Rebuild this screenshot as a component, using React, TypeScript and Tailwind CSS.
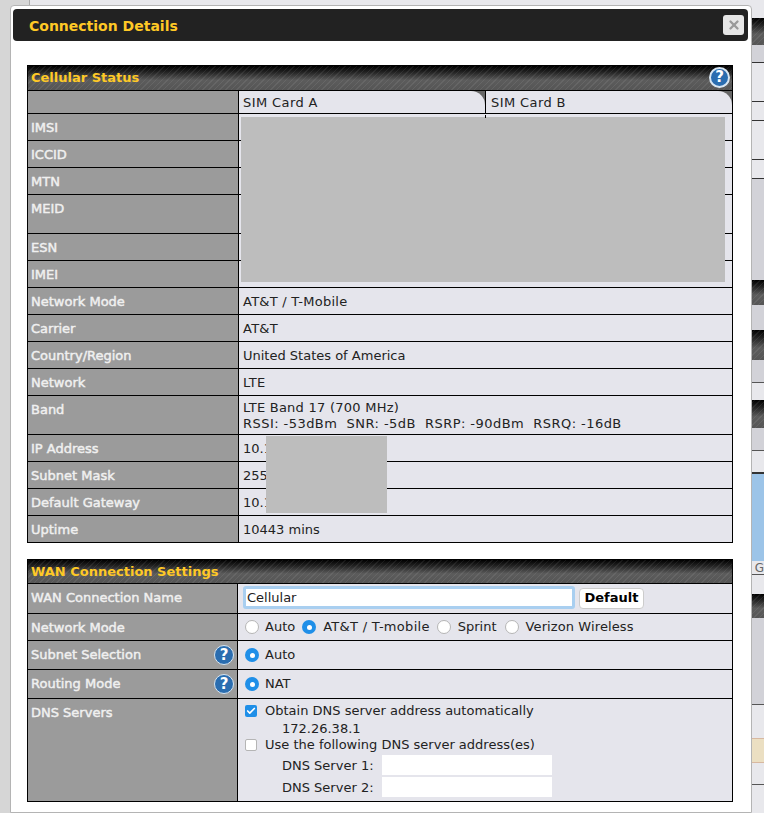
import React from 'react';
import { Check, X } from 'lucide-react';

const stripes =
  "bg-[repeating-linear-gradient(135deg,rgba(255,255,255,0.07)_0px,rgba(255,255,255,0.07)_1px,transparent_1px,transparent_4px),linear-gradient(to_bottom,#000_0%,#222_25%,#5c5c5c_60%,#555_100%)]";

const Help = ({ className = '' }: { className?: string }) => (
  <span className={`flex items-center justify-center rounded-full border border-[#d8e6f2] bg-[#2a6db0] text-white font-bold text-[15px] leading-none ${className}`}>
    ?
  </span>
);

const Radio = ({ on = false }: { on?: boolean }) =>
  on ? (
    <span className="flex h-[14px] w-[14px] shrink-0 items-center justify-center rounded-full bg-[#1f8fe8]">
      <span className="h-[5px] w-[5px] rounded-full bg-white" />
    </span>
  ) : (
    <span className="h-[14px] w-[14px] shrink-0 rounded-full border border-[#b5b5b5] bg-white" />
  );

const Row = ({
  label,
  h,
  children,
  help,
  last,
  wide = true,
  pt = 'pt-[6px]',
}: {
  label: string;
  h: string;
  children?: React.ReactNode;
  help?: boolean;
  last?: boolean;
  wide?: boolean;
  pt?: string;
}) => (
  <div className={`flex ${h} ${last ? '' : 'border-b border-black'}`}>
    <div className={`relative flex-none ${wide ? 'w-[211px]' : 'w-[210px]'} bg-[#9b9b9b] pl-[3px] pt-[6px] text-[#f0f0f0] [-webkit-text-stroke:0.45px_#f0f0f0] border-r border-black`}>
      {label}
      {help && <Help className="absolute right-[3px] top-[4px] h-[20px] w-[20px] [-webkit-text-stroke:0]" />}
    </div>
    <div className={`flex-1 min-w-0 pl-[4px] ${pt} text-[#222]`}>{children}</div>
  </div>
);

const Header = ({ title, children, h }: { title: string; children?: React.ReactNode; h: string }) => (
  <div className={`relative ${h} ${stripes} border-b border-black pl-[3px] font-bold text-[13px] leading-[24px] text-[#ffc926]`}>
    {title}
    {children}
  </div>
);

const statusRows: [string, string, string?][] = [
  ['IMSI', 'h-[27px]'],
  ['ICCID', 'h-[27px]'],
  ['MTN', 'h-[27px]'],
  ['MEID', 'h-[39px]'],
  ['ESN', 'h-[27px]'],
  ['IMEI', 'h-[27px]'],
  ['Network Mode', 'h-[27px]', 'AT&T / T-Mobile'],
  ['Carrier', 'h-[27px]', 'AT&T'],
  ['Country/Region', 'h-[27px]', 'United States of America'],
  ['Network', 'h-[27px]', 'LTE'],
];

export default function App() {
  return (
    <div className="relative h-[813px] w-[764px] overflow-hidden bg-[#e8e8ec] font-['DejaVu_Sans',sans-serif] text-[13px] leading-[16px]">
      {/* page behind the dialog */}
      <div className="flex h-full">
        <div className="w-[31px] h-full bg-[#d6d6d6] border-r border-[#aaa]" />
        <div className="flex-1 flex flex-col">
          <div className="h-[18px]" />
          <div className={`h-[27px] ${stripes}`} />
          <div className="h-[18px] bg-[#d2d2d8] border-b border-[#333]" />
          <div className="h-[39px] border-b border-[#333]" />
          <div className="h-[19px] border-b border-[#333]" />
          <div className="h-[39px] border-b border-[#333]" />
          <div className="h-[19px] border-b border-[#333]" />
          <div className="h-[101px] bg-[#d2d2d8]" />
          <div className={`h-[25px] ${stripes}`} />
          <div className="h-[25px] bg-[#d2d2d8]" />
          <div className={`h-[30px] ${stripes}`} />
          <div className="h-[23px] bg-[#d2d2d8] border-b border-[#555]" />
          <div className="h-[17px]" />
          <div className={`h-[28px] ${stripes}`} />
          <div className="h-[23px] bg-[#d2d2d8] border-b border-[#555]" />
          <div className="h-[21px]" />
          <div className="h-[2px] bg-[#333]" />
          <div className="h-[87px] bg-[#9cc4e8]" />
          <div className="h-[14px] border-b border-[#555] text-[12px] leading-[14px] text-[#666] pl-[725px]">G</div>
          <div className="h-[19px]" />
          <div className={`h-[24px] ${stripes}`} />
          <div className="h-[87px] bg-[#d2d2d8] border-b border-[#555]" />
          <div className="h-[33px]" />
          <div className="h-[25px] bg-[#ebdfc2] border-y border-[#d8b8a0]" />
          <div className="h-[22px] border-b border-[#555]" />
        </div>
      </div>

      {/* dialog */}
      <div className="absolute left-[10px] top-[5px] bottom-0 w-[742px] rounded-t-[4px] border border-[#b4b4b4] bg-white px-[2px] pt-[3px]">
        <div className="flex h-[32px] w-[735px] items-center justify-between rounded-[4px] bg-[#222] pl-[16px] pr-[4px] text-[14px] font-bold text-[#ffc926]">
          <span className="pt-[2px]">Connection Details</span>
          <button className="flex h-[20px] w-[21px] items-center justify-center rounded-[3px] bg-[#e6e6e6] text-[#999]">
            <X size={14} strokeWidth={4} />
          </button>
        </div>

        <div className="relative ml-[14px] mt-[24px] w-[706px] border border-black">
          <Header title="Cellular Status" h="h-[25px]">
            <Help className="absolute right-[2px] top-[1px] h-[21px] w-[21px] border-2" />
          </Header>
          <div className="flex h-[23px] border-b border-black">
            <div className="w-[211px] flex-none bg-[#9b9b9b] border-r border-black" />
            <div className="flex flex-1 bg-[#666]">
              <div className="w-[246px] rounded-tr-[14px] bg-[#e5e5ec] pl-[4px] pt-[4px] tracking-[0.4px] text-[#222]">SIM Card A</div>
              <div className="w-px bg-black" />
              <div className="flex-1 rounded-tr-[14px] bg-[#e5e5ec] pl-[5px] pt-[4px] tracking-[0.4px] text-[#222]">SIM Card B</div>
            </div>
          </div>
          <div className="bg-[#e5e5ec]">
            {statusRows.map(([label, h, value]) => (
              <Row key={label} label={label} h={h}>
                <span className={value && value.length < 20 ? 'tracking-[0.25px]' : ''}>{value}</span>
              </Row>
            ))}
            <Row label="Band" h="h-[39px]" pt="pt-[4px]">
              <div className="tracking-[0.25px]">LTE Band 17 (700 MHz)</div>
              <div className="whitespace-pre tracking-[0.45px]">RSSI: -53dBm  SNR: -5dB  RSRP: -90dBm  RSRQ: -16dB</div>
            </Row>
            <Row label="IP Address" h="h-[27px]">10.1</Row>
            <Row label="Subnet Mask" h="h-[27px]">255</Row>
            <Row label="Default Gateway" h="h-[27px]">10.1</Row>
            <Row label="Uptime" h="h-[26px]" last>10443 mins</Row>
          </div>
          {/* redactions */}
          <div className="absolute left-[213px] top-[51px] h-[165px] w-[484px] bg-[#bdbdbd]" />
          <div className="absolute left-[238px] top-[370px] h-[77px] w-[121px] bg-[#bdbdbd]" />
          <div className="absolute left-[457px] top-[49px] h-[3px] w-px bg-black" />
        </div>

        <div className="ml-[14px] mt-[16px] w-[706px] border border-black">
          <Header title="WAN Connection Settings" h="h-[24px]" />
          <div className="bg-[#e5e5ec]">
            <Row label="WAN Connection Name" h="h-[30px]" wide={false} pt="pt-[5px]">
              <div className="flex items-center gap-[4px] pl-[1px]">
                <input
                  readOnly
                  value="Cellular"
                  className="h-[23px] w-[332px] -mt-[3px] border-[3px] border-[#a9cff0] rounded-[3px] bg-white pl-[1px] text-[13px] text-[#222] outline-none"
                />
                <button className="h-[21px] w-[65px] -mt-[2px] rounded-[4px] border border-[#ccc] bg-white text-[13px] font-bold text-black">Default</button>
              </div>
            </Row>
            <Row label="Network Mode" h="h-[27px]" wide={false} pt="pt-[5px]">
              <div className="flex items-center pl-[3px]">
                <Radio />
                <span className="ml-[6px] mr-[7px]">Auto</span>
                <Radio on />
                <span className="ml-[7px] mr-[7px] tracking-[0.3px]">AT&amp;T / T-mobile</span>
                <Radio />
                <span className="ml-[7px] mr-[8px]">Sprint</span>
                <Radio />
                <span className="ml-[7px] tracking-[0.1px]">Verizon Wireless</span>
              </div>
            </Row>
            <Row label="Subnet Selection" h="h-[29px]" help wide={false} pt="pt-[5px]">
              <div className="flex items-center pl-[3px] pt-[1px]">
                <Radio on />
                <span className="ml-[6px]">Auto</span>
              </div>
            </Row>
            <Row label="Routing Mode" h="h-[29px]" help wide={false} pt="pt-[5px]">
              <div className="flex items-center pl-[3px] pt-[1px]">
                <Radio on />
                <span className="ml-[6px]">NAT</span>
              </div>
            </Row>
            <Row label="DNS Servers" h="h-[102px]" last wide={false} pt="pt-[4px]">
              <div className="pl-[3px]">
                <div className="flex items-center gap-[8px]">
                  <span className="flex h-[12px] w-[12px] items-center justify-center rounded-[2px] bg-[#1f8fe8] text-white">
                    <Check size={10} strokeWidth={4} />
                  </span>
                  Obtain DNS server address automatically
                </div>
                <div className="pl-[37px] pt-[2px]">172.26.38.1</div>
                <div className="flex items-center gap-[8px]">
                  <span className="h-[12px] w-[12px] rounded-[2px] border border-[#b5b5b5] bg-white" />
                  Use the following DNS server address(es)
                </div>
                <div className="flex items-center pl-[37px] mt-[2px]">
                  <span className="w-[100px] pt-[1px]">DNS Server 1:</span>
                  <div className="h-[20px] w-[170px] bg-white" />
                </div>
                <div className="flex items-center pl-[37px] mt-[2px]">
                  <span className="w-[100px] pt-[1px]">DNS Server 2:</span>
                  <div className="h-[20px] w-[170px] bg-white" />
                </div>
              </div>
            </Row>
          </div>
        </div>
      </div>
    </div>
  );
}
